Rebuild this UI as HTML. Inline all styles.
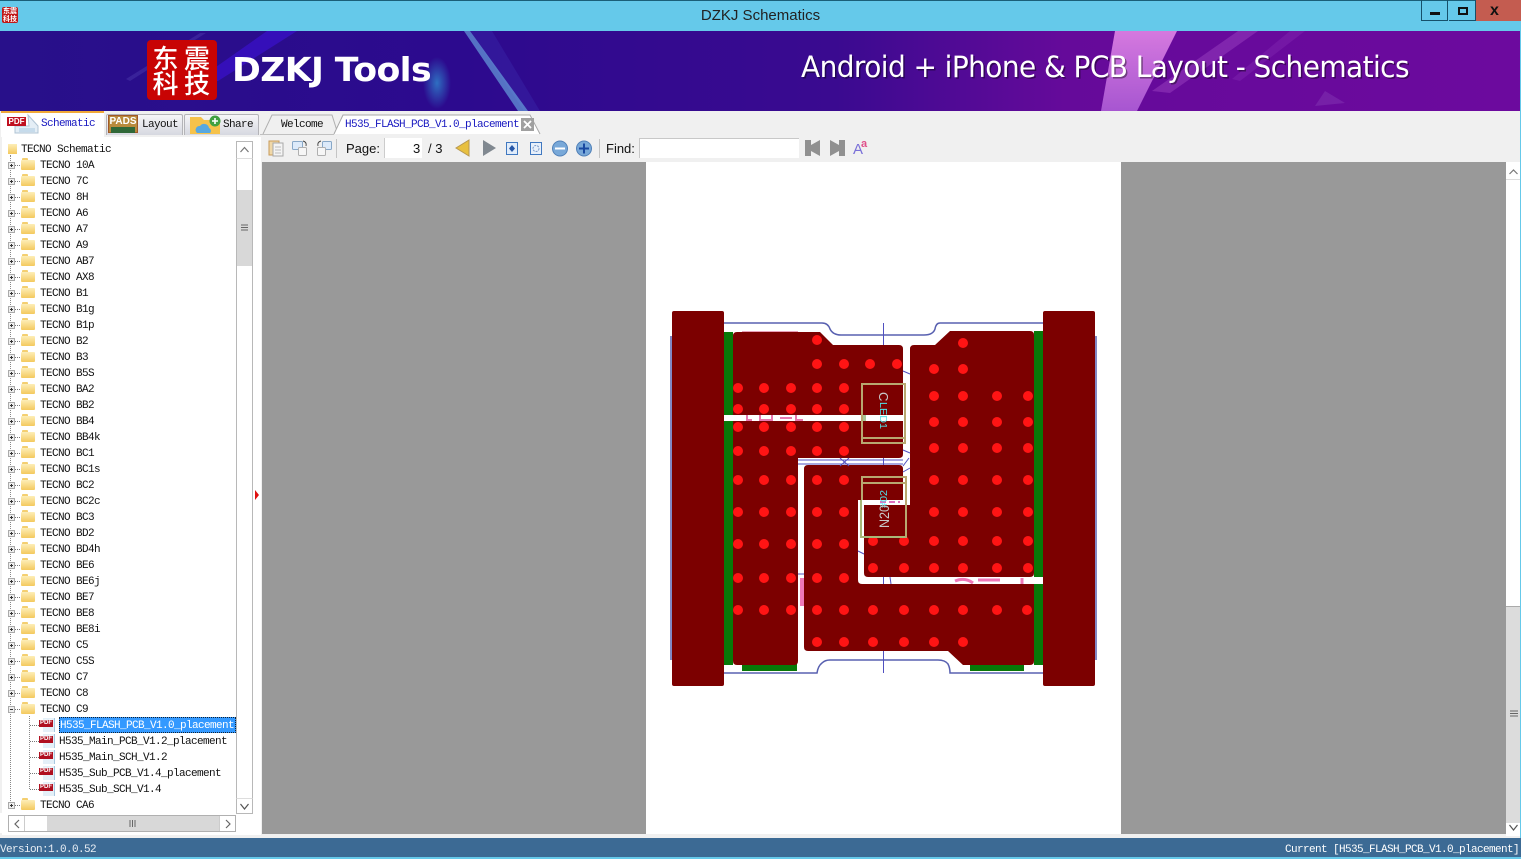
<!DOCTYPE html>
<html><head><meta charset="utf-8"><style>
html,body{margin:0;padding:0;width:1521px;height:859px;overflow:hidden;background:#f0f0f0}
body{position:relative;font-family:"Liberation Mono","Noto Sans CJK SC",monospace;font-size:11px;letter-spacing:-.6px;color:#111}
.a{position:absolute;white-space:pre}
#tree{position:absolute;left:0;top:157px;width:236px}
.r{position:relative;height:16px;line-height:16px}
.r span{position:absolute;left:40px;top:1px;white-space:pre}
.r .f{position:absolute;left:21px;top:3px;width:14px;height:10px;background:linear-gradient(#fdeeb8,#f4c95e);border:0;border-radius:1px}
.r .f:before{content:"";position:absolute;left:1px;top:-2px;width:6px;height:2px;background:#f4cf70;border-radius:1px 1px 0 0}
.r .p{position:absolute;left:8px;top:5px;width:3px;height:3px;padding:1px;border:1px solid #aaa;background:#eee}
.r .p:before{content:"";position:absolute;left:1px;top:2px;width:3px;height:1px;background:#333}
.r .p.o:after{content:"";position:absolute;left:2px;top:1px;width:1px;height:3px;background:#333}
.r .d{position:absolute;left:15px;top:8px;width:5px;border-top:1px dotted #777}
.r.x span{left:59px}
.r.x .d{left:30px;width:9px}
.r.x .b{position:absolute;left:43px;top:1px;width:11px;height:14px;background:#e4f0f8;border-right:1px solid #a8c8e0}
.r.x .i{position:absolute;left:39px;top:3px;width:14px;height:7px;background:#b01020;color:#fff;font:bold 6px/7px "Liberation Sans",sans-serif;letter-spacing:0;text-align:center}
.r span.sel{background:#3399ff;color:#fff;left:59px;top:0;padding:0 1px;width:175px;height:16px;line-height:18px;outline:1px dotted #123;outline-offset:-1px;overflow:hidden}
.tab{position:absolute;top:114px;height:21px;background:linear-gradient(#f6f6f8,#d6d8e0);border:1px solid #b4b4b8;border-bottom:0;border-radius:2px 2px 0 0;box-sizing:border-box}
</style></head><body>

<!-- title bar -->
<div class="a" style="left:0;top:0;width:1521px;height:31px;background:#65c9ea;border-top:1px solid #1a5f78;box-sizing:border-box"></div>
<div class="a" style="left:0;top:7px;width:1521px;text-align:center;font:15px/17px 'Liberation Sans',sans-serif;letter-spacing:0;color:#222">DZKJ Schematics</div>
<div class="a" style="left:2px;top:7px;width:16px;height:16px;background:#c01818;border-radius:2px;color:#fff;font:bold 7px/8px 'Noto Sans CJK SC',sans-serif;letter-spacing:0;text-align:center;white-space:normal">东震科技</div>
<div class="a" style="left:1421px;top:0;width:27px;height:21px;border:1px solid #16506a;border-top:0;box-sizing:border-box"></div>
<div class="a" style="left:1430px;top:12px;width:10px;height:3px;background:#111"></div>
<div class="a" style="left:1449px;top:0;width:27px;height:21px;border-right:1px solid #16506a;border-bottom:1px solid #16506a;box-sizing:border-box"></div>
<div class="a" style="left:1458px;top:7px;width:10px;height:8px;border:2px solid #111;box-sizing:border-box"></div>
<div class="a" style="left:1476px;top:0;width:45px;height:21px;background:#c45c50"></div>
<div class="a" style="left:1490px;top:2px;font:bold 16px/18px 'Liberation Sans',sans-serif;letter-spacing:0;color:#111">x</div>

<!-- banner -->
<svg class="a" style="left:0;top:31px" width="1521" height="80" viewBox="0 0 1521 80">
<defs>
<linearGradient id="bg" x1="0" x2="1" y1="0" y2="0"><stop offset="0" stop-color="#28108a"/><stop offset=".3" stop-color="#2c0a8e"/><stop offset=".55" stop-color="#3a0a90"/><stop offset=".7" stop-color="#650a9a"/><stop offset="1" stop-color="#6c0a9e"/></linearGradient>
<linearGradient id="pb" x1="0" x2="0" y1="0" y2="1"><stop offset="0" stop-color="#e488e8"/><stop offset="1" stop-color="#b060d8"/></linearGradient>
<radialGradient id="gl"><stop offset="0" stop-color="#2f9ad8" stop-opacity=".7"/><stop offset="1" stop-color="#2f9ad8" stop-opacity="0"/></radialGradient>
</defs>
<rect width="1520" height="80" fill="url(#bg)"/>
<polygon points="267,0 297,0 218,50 196,50" fill="#3a10c8" opacity=".75"/>
<polygon points="200,2 206,2 130,50 126,48" fill="#5a48b8" opacity=".35"/>
<polygon points="470,0 492,0 540,80 524,80" fill="#3a28a8" opacity=".45"/>
<polygon points="464,0 470,0 528,80 518,80" fill="#70b8e8" opacity=".6"/>
<ellipse cx="437" cy="52" rx="14" ry="26" fill="url(#gl)"/>
<polygon points="1115,0 1177,0 1137,80 1101,80" fill="url(#pb)" opacity=".88"/>
<polygon points="1238,0 1258,0 1170,62 1152,60" fill="#9a40c0" opacity=".5"/>
<polygon points="1290,0 1305,0 1240,50 1232,48" fill="#8a30b8" opacity=".35"/>
<polygon points="1325,60 1345,72 1315,75" fill="#8a40b8" opacity=".4"/>
<rect x="147" y="9" width="70" height="60" rx="4" fill="#c80404"/>
<g font-family="Noto Sans CJK SC" font-weight="500" font-size="26" fill="#fff">
<text x="152.500" y="37">东</text><text x="184" y="37">震</text>
<text x="152.500" y="62">科</text><text x="184" y="62">技</text>
</g>
<text x="232" y="50" font-family="DejaVu Sans" font-weight="700" font-size="33" fill="#fff" textLength="199" lengthAdjust="spacingAndGlyphs">DZKJ Tools</text>
<text x="801" y="46" font-family="DejaVu Sans" font-size="29" fill="#000" opacity=".4" textLength="608" lengthAdjust="spacingAndGlyphs" transform="translate(1.5 1.5)">Android + iPhone &amp; PCB Layout - Schematics</text>
<text x="801" y="46" font-family="DejaVu Sans" font-size="29" fill="#fff" textLength="608" lengthAdjust="spacingAndGlyphs">Android + iPhone &amp; PCB Layout - Schematics</text>
</svg>
<div class="a" style="left:1520px;top:31px;width:1px;height:828px;background:#65c9ea"></div>

<!-- main tabs -->
<div class="a" style="left:1px;top:111px;width:103px;height:26px;background:#fff;border-top:2px solid #f0a838;box-sizing:border-box"></div>
<div class="tab" style="left:106px;width:77px"></div>
<div class="tab" style="left:184px;width:75px"></div>
<svg class="a" style="left:7px;top:113px" width="32" height="22" viewBox="0 0 32 22"><path d="M21 2 L31 13 V20 H8 V13 H22Z" fill="#e4eef6" stroke="#b0c4d4"/><path d="M12 16H28M12 18H28" stroke="#a8c8e0"/></svg>
<div class="a" style="left:7px;top:117px;width:19px;height:9px;background:#c01020;color:#fff;font:bold 8px/9px 'Liberation Sans',sans-serif;letter-spacing:0;text-align:center">PDF</div>
<div class="a" style="left:41px;top:116px;color:#1818c0;line-height:16px">Schematic</div>
<div class="a" style="left:108px;top:115px;width:30px;height:18px;background:#b88a3c;border:1px solid #a05828;box-sizing:border-box;color:#fff;font:bold 10px/12px 'Liberation Sans',sans-serif;letter-spacing:0;text-align:center;overflow:hidden">PADS</div>
<div class="a" style="left:111px;top:127px;width:24px;height:6px;background:#306838"></div>
<div class="a" style="left:142px;top:117px;line-height:16px">Layout</div>
<svg class="a" style="left:189px;top:113px" width="34" height="22" viewBox="0 0 34 22"><path d="M1 4H12L15 7H31V21H1Z" fill="#f6c24a"/><path d="M8 20a4 4 0 0 1 3-7a5 5 0 0 1 9 2a3 3 0 0 1 1 5Z" fill="#58a8e0"/><circle cx="26" cy="8" r="5.5" fill="#40a040"/><path d="M23 8H29M26 5V11" stroke="#fff" stroke-width="1.6"/></svg>
<div class="a" style="left:223px;top:117px;line-height:16px">Share</div>

<!-- doc tabs -->
<svg class="a" style="left:260px;top:112px" width="300" height="24" viewBox="0 0 300 24">
<path d="M3 22 L12 3 H72 L78 22" fill="#f0f0f0" stroke="#b0b0b0"/>
<path d="M74 22 L83 3 H270 L280 22" fill="#fff" stroke="#a8a8a8"/>
<path d="M0 22.5H74" stroke="#c0c0c0"/>
<rect x="261" y="6" width="13" height="13" fill="#a0a0a0"/>
<path d="M264 9L271 16M271 9L264 16" stroke="#fff" stroke-width="1.8"/>
</svg>
<div class="a" style="left:281px;top:117px;line-height:16px">Welcome</div>
<div class="a" style="left:345px;top:117px;line-height:16px;color:#1818c0">H535_FLASH_PCB_V1.0_placement</div>

<!-- tree panel -->
<div class="a" style="left:2px;top:137px;width:259px;height:698px;background:#fff"></div>
<div class="a" style="left:8px;top:144px;width:9px;height:10px;background:linear-gradient(#fdeeb8,#f4c95e)"></div>
<div class="a" style="left:21px;top:142px;line-height:16px">TECNO Schematic</div>
<div class="a" style="left:10px;top:155px;height:650px;border-left:1px dotted #888"></div>
<div class="a" style="left:29px;top:716px;height:73px;border-left:1px dotted #888"></div>
<div id="tree">
<div class="r"><i class="p o"></i><i class="d"></i><i class="f"></i><span>TECNO 10A</span></div>
<div class="r"><i class="p o"></i><i class="d"></i><i class="f"></i><span>TECNO 7C</span></div>
<div class="r"><i class="p o"></i><i class="d"></i><i class="f"></i><span>TECNO 8H</span></div>
<div class="r"><i class="p o"></i><i class="d"></i><i class="f"></i><span>TECNO A6</span></div>
<div class="r"><i class="p o"></i><i class="d"></i><i class="f"></i><span>TECNO A7</span></div>
<div class="r"><i class="p o"></i><i class="d"></i><i class="f"></i><span>TECNO A9</span></div>
<div class="r"><i class="p o"></i><i class="d"></i><i class="f"></i><span>TECNO AB7</span></div>
<div class="r"><i class="p o"></i><i class="d"></i><i class="f"></i><span>TECNO AX8</span></div>
<div class="r"><i class="p o"></i><i class="d"></i><i class="f"></i><span>TECNO B1</span></div>
<div class="r"><i class="p o"></i><i class="d"></i><i class="f"></i><span>TECNO B1g</span></div>
<div class="r"><i class="p o"></i><i class="d"></i><i class="f"></i><span>TECNO B1p</span></div>
<div class="r"><i class="p o"></i><i class="d"></i><i class="f"></i><span>TECNO B2</span></div>
<div class="r"><i class="p o"></i><i class="d"></i><i class="f"></i><span>TECNO B3</span></div>
<div class="r"><i class="p o"></i><i class="d"></i><i class="f"></i><span>TECNO B5S</span></div>
<div class="r"><i class="p o"></i><i class="d"></i><i class="f"></i><span>TECNO BA2</span></div>
<div class="r"><i class="p o"></i><i class="d"></i><i class="f"></i><span>TECNO BB2</span></div>
<div class="r"><i class="p o"></i><i class="d"></i><i class="f"></i><span>TECNO BB4</span></div>
<div class="r"><i class="p o"></i><i class="d"></i><i class="f"></i><span>TECNO BB4k</span></div>
<div class="r"><i class="p o"></i><i class="d"></i><i class="f"></i><span>TECNO BC1</span></div>
<div class="r"><i class="p o"></i><i class="d"></i><i class="f"></i><span>TECNO BC1s</span></div>
<div class="r"><i class="p o"></i><i class="d"></i><i class="f"></i><span>TECNO BC2</span></div>
<div class="r"><i class="p o"></i><i class="d"></i><i class="f"></i><span>TECNO BC2c</span></div>
<div class="r"><i class="p o"></i><i class="d"></i><i class="f"></i><span>TECNO BC3</span></div>
<div class="r"><i class="p o"></i><i class="d"></i><i class="f"></i><span>TECNO BD2</span></div>
<div class="r"><i class="p o"></i><i class="d"></i><i class="f"></i><span>TECNO BD4h</span></div>
<div class="r"><i class="p o"></i><i class="d"></i><i class="f"></i><span>TECNO BE6</span></div>
<div class="r"><i class="p o"></i><i class="d"></i><i class="f"></i><span>TECNO BE6j</span></div>
<div class="r"><i class="p o"></i><i class="d"></i><i class="f"></i><span>TECNO BE7</span></div>
<div class="r"><i class="p o"></i><i class="d"></i><i class="f"></i><span>TECNO BE8</span></div>
<div class="r"><i class="p o"></i><i class="d"></i><i class="f"></i><span>TECNO BE8i</span></div>
<div class="r"><i class="p o"></i><i class="d"></i><i class="f"></i><span>TECNO C5</span></div>
<div class="r"><i class="p o"></i><i class="d"></i><i class="f"></i><span>TECNO C5S</span></div>
<div class="r"><i class="p o"></i><i class="d"></i><i class="f"></i><span>TECNO C7</span></div>
<div class="r"><i class="p o"></i><i class="d"></i><i class="f"></i><span>TECNO C8</span></div>
<div class="r"><i class="p"></i><i class="d"></i><i class="f"></i><span>TECNO C9</span></div>
<div class="r x"><i class="d"></i><i class="b"></i><i class="i">PDF</i><span class="sel">H535_FLASH_PCB_V1.0_placement</span></div>
<div class="r x"><i class="d"></i><i class="b"></i><i class="i">PDF</i><span>H535_Main_PCB_V1.2_placement</span></div>
<div class="r x"><i class="d"></i><i class="b"></i><i class="i">PDF</i><span>H535_Main_SCH_V1.2</span></div>
<div class="r x"><i class="d"></i><i class="b"></i><i class="i">PDF</i><span>H535_Sub_PCB_V1.4_placement</span></div>
<div class="r x"><i class="d"></i><i class="b"></i><i class="i">PDF</i><span>H535_Sub_SCH_V1.4</span></div>
<div class="r"><i class="p o"></i><i class="d"></i><i class="f"></i><span>TECNO CA6</span></div>
</div>
<div class="a" style="left:0;top:813px;width:236px;height:20px;background:#fff"></div>

<!-- tree scrollbars -->
<svg class="a" style="left:0;top:137px" width="262" height="700" viewBox="0 137 262 700">
<rect x="236.500" y="141.500" width="16" height="672" fill="#fff" stroke="#b8b8b8"/>
<rect x="237" y="190" width="15" height="76" fill="#d8d8d8"/>
<path d="M241 225H248M241 227.500H248M241 230H248" stroke="#666"/>
<path d="M240.500 152L244.500 147.500L248.500 152" fill="none" stroke="#777" stroke-width="1.2"/>
<path d="M240.500 804L244.500 809L248.500 804" fill="none" stroke="#555" stroke-width="1.2"/>
<path d="M236.500 158.500H252.500M236.500 798.500H252.500" stroke="#ddd"/>
<rect x="8.500" y="815.500" width="227" height="16" fill="#fff" stroke="#b0b0b0"/>
<rect x="47" y="816" width="172" height="15" fill="#d8d8d8"/>
<path d="M130 820V827M132.500 820V827M135 820V827" stroke="#666"/>
<path d="M19 820L15 824L19 828M226 820L230 824L226 828" fill="none" stroke="#666" stroke-width="1.2"/>
<path d="M24.500 816V831M219.500 816V831" stroke="#ccc"/>
<path d="M255 490L259 495L255 500Z" fill="#e01010"/>
</svg>

<!-- toolbar -->
<svg class="a" style="left:262px;top:136px" width="620" height="26" viewBox="262 136 620 26">
<path d="M269 141H279V155H269Z" fill="#f0d8a8" stroke="#c89a58"/><path d="M273 143H283V156H273Z" fill="#f4f4f4" stroke="#a8a8a8"/><path d="M275 147H281M275 150H281M275 153H281" stroke="#bbb"/>
<rect x="292.500" y="141.500" width="10" height="8" rx="1" fill="#dceafa" stroke="#88a8c8"/><rect x="298.500" y="147.500" width="8" height="8" rx="1" fill="#f6f6f6" stroke="#b0b0b0"/><path d="M303 141Q307 142 306 146" fill="none" stroke="#444"/>
<rect x="322.500" y="141.500" width="9" height="8" rx="1" fill="#dceafa" stroke="#88a8c8"/><rect x="317.500" y="147.500" width="8" height="8" rx="1" fill="#f6f6f6" stroke="#b0b0b0"/><path d="M321 141Q317 142 318 146" fill="none" stroke="#444"/>
<path d="M336.500 139V158M599.500 139V158" stroke="#c4c4c4"/>
<path d="M469 140V156L456 148Z" fill="#e8c040" stroke="#b89850"/>
<path d="M483 140V156L496 148Z" fill="#808890"/>
<rect x="506.500" y="142.500" width="11" height="12" fill="#e0ecfa" stroke="#4078c0"/><path d="M512 145L509 148.500L512 152ZM512 145L515 148.500L512 152Z" fill="#2858a8"/>
<rect x="530.500" y="142.500" width="11" height="12" fill="#e8f0fa" stroke="#4078c0"/><circle cx="536" cy="148.500" r="3" fill="none" stroke="#7898c8" stroke-dasharray="2 1"/>
<circle cx="560" cy="148.500" r="7.500" fill="#78a8d8" stroke="#5080b8"/><path d="M555 148.500H565" stroke="#fff" stroke-width="2"/>
<circle cx="584" cy="148.500" r="7.500" fill="#78a8d8" stroke="#5080b8"/><path d="M579 148.500H589M584 143.500V153.500" stroke="#1848a0" stroke-width="2"/>
<path d="M805 140H811V145L820 140V156L811 151V156H805Z" fill="#909090"/>
<path d="M845 140H839V145L830 140V156L839 151V156H845Z" fill="#909090"/>
</svg>
<div class="a" style="left:384px;top:138px;width:38px;height:20px;background:#fff;border-left:1px solid #ccc;box-sizing:border-box"></div>
<div class="a" style="left:639px;top:138px;width:160px;height:20px;background:#fff;border:1px solid #c8c8c8;border-right:0;border-bottom:0;box-sizing:border-box"></div>
<div class="a" style="left:346px;top:141px;font:13px/15px 'Liberation Sans',sans-serif;letter-spacing:0">Page:</div>
<div class="a" style="left:413px;top:141px;font:13px/15px 'Liberation Sans',sans-serif;letter-spacing:0">3</div>
<div class="a" style="left:428px;top:141px;font:13px/15px 'Liberation Sans',sans-serif;letter-spacing:0">/ 3</div>
<div class="a" style="left:606px;top:141px;font:13px/15px 'Liberation Sans',sans-serif;letter-spacing:0">Find:</div>
<div class="a" style="left:853px;top:142px;font:15px/15px 'Liberation Sans',sans-serif;letter-spacing:0;color:#7a70d8">A</div>
<div class="a" style="left:861px;top:139px;font:bold 11px/11px 'Liberation Sans',sans-serif;letter-spacing:0;color:#e0508a">a</div>

<!-- viewer -->
<div class="a" style="left:262px;top:162px;width:1244px;height:672px;background:#999"></div>
<svg class="a" style="left:646px;top:162px" width="475" height="672" viewBox="646 162 475 672">
<rect x="646" y="162" width="475" height="672" fill="#fff"/>
<!-- board outline -->
<path d="M724 323H822Q828 323 830 329Q833 335 841 335H924Q933 335 935 329Q936 323 940 323H1043" fill="none" stroke="#5860b0" stroke-width="1.5"/>
<path d="M724 673H817Q818 666 822 663Q825 660 830 660H938Q945 660 948 664Q950 668 950 673H1043" fill="none" stroke="#5860b0" stroke-width="1.5"/>
<path d="M671 336V660M1096 336V660" stroke="#5860b0" stroke-width="1.5"/>
<!-- pink silk under -->
<path d="M742 332H798" stroke="#e8a0b8" stroke-width="2"/>
<path d="M747 415V420H752M760 415V420H772V415M780 418H792M796 415V420H803" stroke="#e878b0" stroke-width="2" fill="none"/>
<rect x="800" y="578" width="5" height="28" fill="#ef78b8"/>
<path d="M955 581Q965 577 973 583M978 580H1000M1022 578V584" stroke="#ef78b8" stroke-width="3" fill="none"/>
<!-- green -->
<rect x="724" y="332" width="9" height="333" fill="#087808"/>
<rect x="1034" y="331" width="9" height="334" fill="#087808"/>
<rect x="742" y="662" width="55" height="9" fill="#087808"/>
<rect x="970" y="662" width="54" height="9" fill="#087808"/>
<rect x="724" y="415" width="9" height="6" fill="#fff"/>
<rect x="1034" y="577" width="9" height="7" fill="#fff"/>
<!-- copper -->
<g fill="#7c0000">
<path d="M737 332H820L833 345H899Q903 345 903 349V415H733V336Q733 332 737 332Z"/>
<path d="M733 421H903V454Q903 458 899 458H798V661Q798 665 794 665H737Q733 665 733 661Z"/>
<path d="M808 465H899Q903 465 903 469V500H858V580Q858 584 862 584H1034V661Q1034 665 1030 665H963L948 651H808Q804 651 804 647V469Q804 465 808 465Z"/>
<path d="M914 345H935L950 331H1030Q1034 331 1034 335V573Q1034 577 1030 577H868Q864 577 864 573V505H910V349Q910 345 914 345Z"/>
<rect x="672" y="311" width="52" height="375" rx="2"/>
<rect x="1043" y="311" width="52" height="375" rx="2"/>
</g>
<!-- nets -->
<g stroke="#5050c0" stroke-width="1" fill="none">
<path d="M883.500 323V345M883.500 458V465M883.500 651V673M883.500 577V584"/>
<path d="M798 460H903M798 464H903"/>
<path d="M840 458L849 466M849 458L840 466"/>
<path d="M903 371L910 374M903 450L910 453M903 472L910 468M903 466L909 458M798 574H804M858 551L864 554M890 577L891 584"/>
</g>
<!-- vias -->
<g fill="#ff1414">
<circle cx="817" cy="340" r="5"/>
<circle cx="817" cy="364" r="5"/><circle cx="844" cy="364" r="5"/><circle cx="870" cy="364" r="5"/><circle cx="897" cy="364" r="5"/>
<circle cx="738" cy="388" r="5"/><circle cx="764" cy="388" r="5"/><circle cx="791" cy="388" r="5"/><circle cx="817" cy="388" r="5"/><circle cx="844" cy="388" r="5"/>
<circle cx="738" cy="409" r="5"/><circle cx="764" cy="409" r="5"/><circle cx="791" cy="409" r="5"/><circle cx="817" cy="409" r="5"/><circle cx="844" cy="409" r="5"/>
<circle cx="738" cy="427" r="5"/><circle cx="764" cy="427" r="5"/><circle cx="791" cy="427" r="5"/><circle cx="817" cy="427" r="5"/><circle cx="844" cy="427" r="5"/>
<circle cx="738" cy="451" r="5"/><circle cx="764" cy="451" r="5"/><circle cx="791" cy="451" r="5"/><circle cx="817" cy="451" r="5"/><circle cx="844" cy="451" r="5"/>
<circle cx="738" cy="480" r="5"/><circle cx="764" cy="480" r="5"/><circle cx="791" cy="480" r="5"/><circle cx="817" cy="480" r="5"/><circle cx="844" cy="480" r="5"/>
<circle cx="738" cy="512" r="5"/><circle cx="764" cy="512" r="5"/><circle cx="791" cy="512" r="5"/><circle cx="817" cy="512" r="5"/><circle cx="844" cy="512" r="5"/>
<circle cx="738" cy="544" r="5"/><circle cx="764" cy="544" r="5"/><circle cx="791" cy="544" r="5"/><circle cx="817" cy="544" r="5"/><circle cx="844" cy="544" r="5"/>
<circle cx="738" cy="578" r="5"/><circle cx="764" cy="578" r="5"/><circle cx="791" cy="578" r="5"/><circle cx="817" cy="578" r="5"/><circle cx="844" cy="578" r="5"/>
<circle cx="738" cy="610" r="5"/><circle cx="764" cy="610" r="5"/><circle cx="791" cy="610" r="5"/><circle cx="817" cy="610" r="5"/><circle cx="844" cy="610" r="5"/>
<circle cx="817" cy="642" r="5"/><circle cx="844" cy="642" r="5"/>
<circle cx="963" cy="343" r="5"/>
<circle cx="934" cy="369" r="5"/><circle cx="963" cy="369" r="5"/>
<circle cx="934" cy="396" r="5"/><circle cx="963" cy="396" r="5"/><circle cx="997" cy="396" r="5"/><circle cx="1028" cy="396" r="5"/>
<circle cx="934" cy="422" r="5"/><circle cx="963" cy="422" r="5"/><circle cx="997" cy="422" r="5"/><circle cx="1028" cy="422" r="5"/>
<circle cx="934" cy="448" r="5"/><circle cx="963" cy="448" r="5"/><circle cx="997" cy="448" r="5"/><circle cx="1028" cy="448" r="5"/>
<circle cx="934" cy="480" r="5"/><circle cx="963" cy="480" r="5"/><circle cx="997" cy="480" r="5"/><circle cx="1028" cy="480" r="5"/>
<circle cx="934" cy="512" r="5"/><circle cx="963" cy="512" r="5"/><circle cx="997" cy="512" r="5"/><circle cx="1028" cy="512" r="5"/>
<circle cx="873" cy="541" r="5"/><circle cx="904" cy="541" r="5"/><circle cx="934" cy="541" r="5"/><circle cx="963" cy="541" r="5"/><circle cx="997" cy="541" r="5"/><circle cx="1028" cy="541" r="5"/>
<circle cx="873" cy="568" r="5"/><circle cx="904" cy="568" r="5"/><circle cx="934" cy="568" r="5"/><circle cx="963" cy="568" r="5"/><circle cx="997" cy="568" r="5"/><circle cx="1028" cy="568" r="5"/>
<circle cx="873" cy="610" r="5"/><circle cx="904" cy="610" r="5"/><circle cx="934" cy="610" r="5"/><circle cx="963" cy="610" r="5"/><circle cx="997" cy="610" r="5"/><circle cx="1027" cy="610" r="5"/>
<circle cx="873" cy="642" r="5"/><circle cx="904" cy="642" r="5"/><circle cx="934" cy="642" r="5"/><circle cx="963" cy="642" r="5"/>
</g>
<!-- white gaps across pads -->
<rect x="861" y="415" width="44" height="6" fill="#fff"/>
<rect x="858" y="500" width="48" height="5" fill="#fff"/>
<rect x="862" y="415" width="4" height="6" fill="#a8c898"/>
<!-- pads -->
<g fill="none" stroke="#b8a870" stroke-width="2">
<rect x="862" y="384" width="43" height="59"/>
<path d="M862 438H905"/>
<path d="M862 500V477H906V537H861"/>
<path d="M862 483H906"/>
</g>
<path d="M861 500V537H905" fill="none" stroke="#a8b878" stroke-width="2"/>
<path d="M880 502H900" stroke="#e070c0" stroke-width="2" stroke-dasharray="6 3"/>
<text font-family="Liberation Sans" font-size="13" fill="#c8c8c8" letter-spacing="0" transform="translate(879 392) rotate(90)">C</text>
<text font-family="Liberation Sans" font-size="10" fill="#50e0e8" letter-spacing="0" transform="translate(880 402) rotate(90)" textLength="27" lengthAdjust="spacingAndGlyphs">LED1</text>
<text font-family="Liberation Sans" font-size="10" fill="#50e0e8" letter-spacing="0" transform="translate(887 502) rotate(-90)" textLength="12" lengthAdjust="spacingAndGlyphs">02</text>
<text font-family="Liberation Sans" font-size="10" fill="#40f0ff" letter-spacing="0" transform="translate(887 508) rotate(-90)">#</text>
<text font-family="Liberation Sans" font-size="14" fill="#c8c8c8" letter-spacing="0" transform="translate(889 528) rotate(-90)" textLength="23" lengthAdjust="spacingAndGlyphs">N20</text>
</svg>

<!-- right scrollbar -->
<svg class="a" style="left:1506px;top:162px" width="14" height="674" viewBox="1506 162 14 674">
<rect x="1506" y="162" width="14" height="674" fill="#fff"/>
<rect x="1506" y="607" width="14" height="216" fill="#dcdcdc"/>
<path d="M1506 606.500H1520" stroke="#aaa"/>
<path d="M1510 711H1518M1510 713.500H1518M1510 716H1518" stroke="#666"/>
<path d="M1509.500 174L1513.500 170L1517.500 174" fill="none" stroke="#777" stroke-width="1.2"/>
<path d="M1509.500 825L1513.500 830L1517.500 825" fill="none" stroke="#555" stroke-width="1.2"/>
<path d="M1506 179.500H1520M1506 822.500H1520" stroke="#ddd"/>
</svg>

<!-- status bar -->
<div class="a" style="left:0;top:838px;width:1521px;height:19px;background:#3c6a94"></div>
<div class="a" style="left:0;top:857px;width:1521px;height:2px;background:#65c9ea"></div>
<div class="a" style="left:0;top:842px;line-height:16px;color:#e8eef4">Version:1.0.0.52</div>
<div class="a" style="left:1285px;top:842px;line-height:16px;color:#fff">Current [H535_FLASH_PCB_V1.0_placement]</div>
</body></html>
